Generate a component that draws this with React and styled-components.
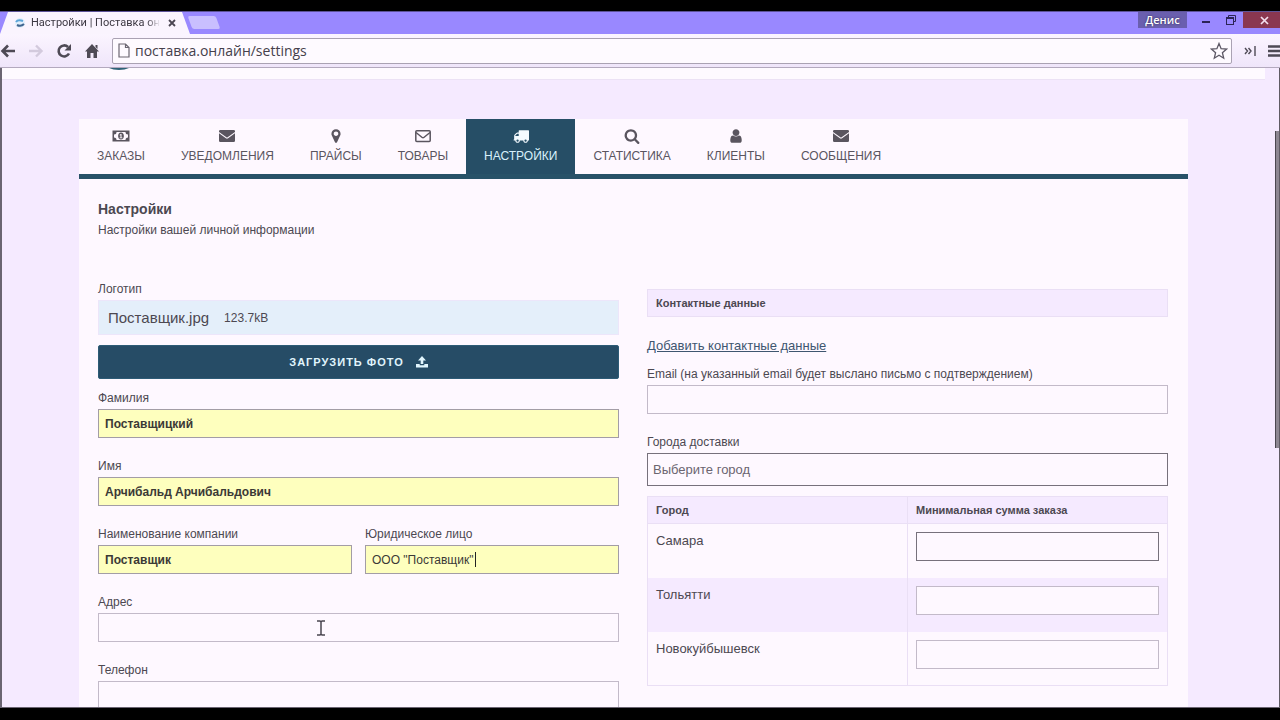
import styled, { createGlobalStyle } from "styled-components";

const tabs = [
    { icon: "money", label: "ЗАКАЗЫ" },
    { icon: "envelope", label: "УВЕДОМЛЕНИЯ" },
    { icon: "marker", label: "ПРАЙСЫ" },
    { icon: "envelopeOpen", label: "ТОВАРЫ" },
    { icon: "truck", label: "НАСТРОЙКИ", active: true },
    { icon: "search", label: "СТАТИСТИКА" },
    { icon: "user", label: "КЛИЕНТЫ" },
    { icon: "envelope", label: "СООБЩЕНИЯ" },
];

const cities = [
    { id: "samara", name: "Самара", dark: true },
    { id: "tolyatti", name: "Тольятти" },
    { id: "novokuybyshevsk", name: "Новокуйбышевск" },
];

function NavIcon({ name }) {
    switch (name) {
        case "money":
            return (
                <svg width="18" height="16" viewBox="0 0 18 16" fill="currentColor">
                    <path fillRule="evenodd" d="M.5 2.500h17v11H.5zM4.500 4A2.500 2.500 0 0 1 2 6.500v3A2.500 2.500 0 0 1 4.500 12h9A2.500 2.500 0 0 1 16 9.500v-3A2.500 2.500 0 0 1 13.500 4z" />
                    <path fillRule="evenodd" d="M9 4.500c1.900 0 2.900 1.600 2.900 3.500s-1 3.500-2.900 3.500S6.100 9.900 6.100 8 7.100 4.500 9 4.500zM8.700 5.900L7.500 7l.5.600.5-.4v2.200h-.9v.8h2.800v-.8h-.9V5.900z" />
                </svg>
            );
        case "envelope":
            return (
                <svg width="16" height="16" viewBox="0 0 16 16" fill="currentColor">
                    <path d="M0 3.300Q0 2 1.300 2h13.400Q16 2 16 3.300v.6L8.600 9.300q-.6.400-1.200 0L0 3.900z" />
                    <path d="M0 5.300l6.900 5q1.100.8 2.200 0l6.900-5v7.400q0 1.300-1.300 1.300H1.300Q0 14 0 12.700z" />
                </svg>
            );
        case "envelopeOpen":
            return (
                <svg width="16" height="16" viewBox="0 0 16 16" fill="none" stroke="currentColor" strokeWidth="1.500">
                    <rect x=".8" y="2.700" width="14.400" height="10.800" rx="1" />
                    <path d="M1 4.500l6.200 5q.8.600 1.600 0l6.200-5" />
                </svg>
            );
        case "marker":
            return (
                <svg width="16" height="16" viewBox="0 0 1792 1792" fill="currentColor">
                    <path d="M1152 640q0-106-75-181t-181-75-181 75-75 181 75 181 181 75 181-75 75-181zm256 0q0 109-33 179l-364 774q-16 33-47.500 52t-67.500 19-67.500-19-46.500-52l-365-774q-33-70-33-179 0-212 150-362t362-150 362 150 150 362z" />
                </svg>
            );
        case "truck":
            return (
                <svg width="16" height="16" viewBox="0 0 1792 1792" fill="#f4fbff">
                    <path d="M640 1408q0-52-38-90t-90-38-90 38-38 90 38 90 90 38 90-38 38-90zm-384-512h384v-256h-158q-13 0-22 9l-195 195q-9 9-9 22v30zm1280 512q0-52-38-90t-90-38-90 38-38 90 38 90 90 38 90-38 38-90zm256-1088v1024q0 15-4 26.500t-13.500 18.500-16.500 11.500-23.500 6-22.500 2-25.500 0-22.500-.5q0 106-75 181t-181 75-181-75-75-181h-384q0 106-75 181t-181 75-181-75-75-181h-64q-3 0-22.500.5t-25.500 0-22.500-2-23.500-6-16.500-11.500-13.500-18.500-4-26.500q0-26 19-45t45-19v-320q0-8-.5-35t0-38 2.500-34.500 6.500-37 14-30.500 22.500-30l198-198q19-19 50.500-32t58.500-13h160v-192q0-26 19-45t45-19h1024q26 0 45 19t19 45z" />
                </svg>
            );
        case "search":
            return (
                <svg width="16" height="16" viewBox="0 0 1792 1792" fill="currentColor">
                    <path d="M1216 832q0-185-131.500-316.500t-316.500-131.500-316.500 131.500-131.500 316.500 131.500 316.500 316.500 131.500 316.500-131.500 131.500-316.500zm512 832q0 52-38 90t-90 38q-54 0-90-38l-343-342q-179 124-399 124-143 0-273.500-55.500t-225-150-150-225-55.500-273.500 55.500-273.500 150-225 225-150 273.500-55.500 273.500 55.500 225 150 150 225 55.500 273.500q0 220-124 399l343 343q37 37 37 90z" />
                </svg>
            );
        default:
            return (
                <svg width="16" height="16" viewBox="0 0 1792 1792" fill="currentColor">
                    <path d="M1536 1399q0 109-62.500 187t-150.500 78h-854q-88 0-150.500-78t-62.500-187q0-85 8.500-160.500t31.500-152 58.500-131 94-89 134.500-34.500q131 128 313 128t313-128q76 0 134.500 34.500t94 89 58.500 131 31.500 152 8.500 160.500zm-256-887q0 159-112.500 271.500t-271.500 112.500-271.500-112.500-112.500-271.500 112.500-271.500 271.500-112.500 271.500 112.500 112.500 271.500z" />
                </svg>
            );
    }
}

function Field({ id, label, value, dark, light, caret }) {
    return (
        <FieldBox>
            <FieldLabel htmlFor={id}>{label}</FieldLabel>
            <InputWrap>
                <TextInput id={id} defaultValue={value} $filled={!!value} $dark={dark} $light={light} />
                {caret && <Caret />}
            </InputWrap>
        </FieldBox>
    );
}

function BrowserHeader() {
    return (
        <header>
            <TitleBar>
                <BrowserTab>
                    <svg width="12" height="12" viewBox="0 0 12 12" fill="none" strokeWidth="2">
                        <circle cx="6" cy="6" r="5" fill="#e2effb" />
                        <path d="M2 5q2-3 7-1" stroke="#5ba4d8" />
                        <path d="M3 8q4 2 7-1" stroke="#3f6590" />
                    </svg>
                    <TabTitle>Настройки | Поставка он</TabTitle>
                    <TabClose aria-label="Закрыть вкладку">
                        <svg width="8" height="8" viewBox="0 0 8 8" stroke="#4b4652" strokeWidth="1.800">
                            <path d="M1 1l6 6M7 1l-6 6" />
                        </svg>
                    </TabClose>
                </BrowserTab>
                <NewTab aria-label="Новая вкладка" />
                <WindowButtons>
                    <UserButton>Денис</UserButton>
                    <WindowButton aria-label="Свернуть">
                        <svg width="10" height="10" viewBox="0 0 10 10" stroke="#2b2456" strokeWidth="2">
                            <path d="M1 7h8" />
                        </svg>
                    </WindowButton>
                    <WindowButton aria-label="Развернуть">
                        <svg width="10" height="10" viewBox="0 0 10 10" fill="none" stroke="#2b2456">
                            <path d="M2.500 2V.5h7v6H8" />
                            <rect x=".5" y="2.500" width="7" height="7" />
                            <path d="M.5 3.500h7" />
                        </svg>
                    </WindowButton>
                    <CloseButton aria-label="Закрыть">
                        <svg width="9" height="9" viewBox="0 0 9 9" stroke="#f3dfee" strokeWidth="1.700">
                            <path d="M1 1l7 7M8 1L1 8" />
                        </svg>
                    </CloseButton>
                </WindowButtons>
            </TitleBar>
            <Toolbar>
                <ToolButton aria-label="Назад">
                    <svg width="16" height="16" viewBox="0 0 16 16" fill="none" stroke="#4e4a55" strokeWidth="2.600">
                        <path d="M15 8H3M8 2.500L2.500 8 8 13.500" />
                    </svg>
                </ToolButton>
                <ToolButton aria-label="Вперёд">
                    <svg width="16" height="16" viewBox="0 0 16 16" fill="none" stroke="#d3cadd" strokeWidth="2.400">
                        <path d="M1 8h12M8 2.500L13.500 8 8 13.500" />
                    </svg>
                </ToolButton>
                <ToolButton aria-label="Обновить">
                    <svg width="16" height="16" viewBox="0 0 16 16" fill="none">
                        <path d="M13 10.500A5.500 5.500 0 1 1 12 4" stroke="#4e4a55" strokeWidth="2.600" />
                        <path d="M15 1v6.500H8.500z" fill="#4e4a55" />
                    </svg>
                </ToolButton>
                <ToolButton aria-label="Домой">
                    <svg width="16" height="16" viewBox="0 0 16 16" fill="#4e4a55">
                        <path d="M8 1l7 7.500h-2V15H9.500v-5h-3v5H3V8.500H1zM11.500 2h2v4l-2-2z" />
                    </svg>
                </ToolButton>
                <AddressBar>
                    <svg width="12" height="15" viewBox="0 0 12 15" fill="none" stroke="#6c6772" strokeWidth="1.200">
                        <path d="M1 1h6.500L11 4.500V14H1zM7.500 1v3.500H11" />
                    </svg>
                    <AddressInput aria-label="Адрес страницы" defaultValue="поставка.онлайн/settings" />
                    <StarButton aria-label="Добавить в закладки">
                        <svg width="18" height="18" viewBox="0 0 18 18" fill="none" stroke="#5d5866" strokeWidth="1.300">
                            <path d="M9 1.500l2.100 5.200 5.500.4-4.200 3.600 1.300 5.500L9 13.200l-4.700 3 1.300-5.500L1.400 7.100l5.500-.4z" />
                        </svg>
                    </StarButton>
                </AddressBar>
                <MenuButton aria-label="Расширения">
                    <svg width="12" height="12" viewBox="0 0 12 12" fill="none" stroke="#4e4a55" strokeWidth="1.400">
                        <path d="M1 3l2.500 3L1 9M4.500 3L7 6 4.500 9M11 1v10" />
                    </svg>
                </MenuButton>
                <MenuButton aria-label="Меню">
                    <svg width="12" height="12" viewBox="0 0 12 12" stroke="#4e4a55" strokeWidth="2.400">
                        <path d="M0 1.500h12M0 6h12M0 10.500h12" />
                    </svg>
                </MenuButton>
            </Toolbar>
        </header>
    );
}

export default function App() {
    return (
        <Screen>
            <GlobalStyle />
            <BrowserHeader />
            <Viewport>
                <Page>
                    <SiteHeader>
                        <svg width="20" height="3" viewBox="0 0 20 3" fill="#2f6378">
                            <path d="M0 0h20q-4 2-10 2T0 0z" />
                        </svg>
                    </SiteHeader>
                    <Card>
                        <Nav>
                            {tabs.map((tab) => (
                                <NavLink key={tab.label} href="#" $active={tab.active}>
                                    <NavIcon name={tab.icon} />
                                    {tab.label}
                                </NavLink>
                            ))}
                        </Nav>
                        <Content>
                            <Title>Настройки</Title>
                            <Subtitle>Настройки вашей личной информации</Subtitle>
                            <Columns>
                                <Column>
                                    <FieldLabel as="p">Логотип</FieldLabel>
                                    <FileBox>
                                        <FileName>Поставщик.jpg</FileName>
                                        <FileSize>123.7kB</FileSize>
                                    </FileBox>
                                    <UploadButton>
                                        ЗАГРУЗИТЬ ФОТО
                                        <svg width="12" height="12" viewBox="0 0 12 12" fill="currentColor">
                                            <path d="M6 0l4 4.500H7.300V8H4.700V4.500H2zM0 8h3.700v1.300h4.600V8H12v3.500H0z" />
                                        </svg>
                                    </UploadButton>
                                    <Field id="surname" label="Фамилия" value="Поставщицкий" />
                                    <Field id="name" label="Имя" value="Арчибальд Арчибальдович" />
                                    <FieldPair>
                                        <Field id="company" label="Наименование компании" value="Поставщик" />
                                        <Field id="legal" label="Юридическое лицо" value={'ООО "Поставщик"'} light caret />
                                    </FieldPair>
                                    <Field id="address" label="Адрес" />
                                    <Field id="phone" label="Телефон" />
                                </Column>
                                <Column>
                                    <PanelTitle>Контактные данные</PanelTitle>
                                    <AddLink href="#">Добавить контактные данные</AddLink>
                                    <Field id="email" label="Email (на указанный email будет выслано письмо с подтверждением)" />
                                    <FieldLabel htmlFor="city">Города доставки</FieldLabel>
                                    <CityInput id="city" placeholder="Выберите город" />
                                    <CityTable>
                                        <thead>
                                            <tr>
                                                <th>Город</th>
                                                <th>Минимальная сумма заказа</th>
                                            </tr>
                                        </thead>
                                        <tbody>
                                            {cities.map((city) => (
                                                <tr key={city.id}>
                                                    <td>
                                                        <label htmlFor={city.id}>{city.name}</label>
                                                    </td>
                                                    <td>
                                                        <TextInput id={city.id} $dark={city.dark} />
                                                    </td>
                                                </tr>
                                            ))}
                                        </tbody>
                                    </CityTable>
                                </Column>
                            </Columns>
                        </Content>
                    </Card>
                </Page>
                <ScrollTrack>
                    <ScrollThumb />
                </ScrollTrack>
                <Pointer width="10" height="16" viewBox="0 0 10 16" fill="none" stroke="#4a4550" strokeWidth="1.500">
                    <path d="M1 1h3l1 1 1-1h3M5 2v12M1 15h3l1-1 1 1h3" />
                </Pointer>
            </Viewport>
        </Screen>
    );
}

const GlobalStyle = createGlobalStyle`
    * {
        box-sizing: border-box;
    }
    body {
        margin: 0;
        background: #000;
        font-family: "Liberation Sans", Arial, sans-serif;
        color: #4c4851;
    }
    button {
        border: 0;
        padding: 0;
        background: none;
        font-family: inherit;
    }
    h1, p {
        margin: 0;
    }
`;

const Screen = styled.div`
    height: 100vh;
    padding: 11px 0 12px;
    display: flex;
    flex-direction: column;
    overflow: hidden;
    background: #000;
`;

const TitleBar = styled.div`
    display: flex;
    height: 23px;
    background: #9988ff;
    border-top: 1px solid #5d5399;
`;

const BrowserTab = styled.div`
    display: flex;
    align-items: center;
    gap: 5px;
    width: 190px;
    padding-left: 14px;
    background: #faf4fe;
    clip-path: polygon(8px 0, 182px 0, 190px 100%, 0 100%);
`;

const TabTitle = styled.span`
    width: 129px;
    white-space: nowrap;
    font-family: Roboto, sans-serif;
    font-size: 11px;
    line-height: 20px;
    color: #3c3842;
    mask-image: linear-gradient(to right, #000 90%, transparent);
`;

const TabClose = styled.button`
    display: flex;
    margin-left: 3px;
`;

const NewTab = styled.button`
    width: 28px;
    height: 13px;
    margin-top: 4px;
    background: #c9bfff;
    border-radius: 2px;
    transform: skewX(20deg);
`;

const WindowButtons = styled.div`
    display: flex;
    align-items: flex-start;
    margin-left: auto;
`;

const UserButton = styled.button`
    width: 49px;
    height: 16px;
    margin-right: 6px;
    background: #6a5fae;
    font-family: "Open Sans", sans-serif;
    font-size: 11px;
    font-weight: 600;
    line-height: 14px;
    color: #fff;
    text-shadow: 0 0 2px #2d2850;
`;

const WindowButton = styled.button`
    display: flex;
    align-items: center;
    justify-content: center;
    width: 25px;
    height: 16px;
`;

const CloseButton = styled(WindowButton)`
    width: 37px;
    padding-left: 6px;
    background: #8a3750;
`;

const Toolbar = styled.div`
    display: flex;
    align-items: center;
    gap: 12px;
    height: 34px;
    overflow: hidden;
    background: linear-gradient(#fbf5ff, #efe5fa);
    border-bottom: 1px solid #b3a9be;
`;

const ToolButton = styled.button`
    display: flex;
`;

const AddressBar = styled.div`
    flex: 1;
    display: flex;
    align-items: center;
    gap: 5px;
    height: 26px;
    padding: 0 3px 0 5px;
    background: #fefaff;
    border: 1px solid #aaa2b3;
    border-radius: 2px;
`;

const AddressInput = styled.input`
    flex: 1;
    padding: 0;
    border: 0;
    outline: 0;
    background: none;
    font-family: "Open Sans", sans-serif;
    font-size: 14px;
    color: #45404b;
`;

const StarButton = styled.button`
    display: flex;
`;

const MenuButton = styled.button`
    display: flex;
`;

const Viewport = styled.main`
    position: relative;
    flex: 1;
    display: flex;
    min-height: 0;
    overflow: hidden;
    background: #f5eaff;
    border-left: 2px solid #6b6572;
    border-bottom: 1px solid #6b6572;
`;

const Page = styled.div`
    flex: 1;
`;

const SiteHeader = styled.div`
    display: flex;
    height: 12px;
    padding-left: 107px;
    background: #fefaff;
    border-bottom: 1px solid #ece2f5;
`;

const Card = styled.section`
    margin: 39px 77px 0;
    background: #fef8ff;
`;

const Nav = styled.nav`
    display: flex;
    border-bottom: 5px solid #285268;
`;

const NavLink = styled.a`
    display: flex;
    flex-direction: column;
    align-items: center;
    gap: 3px;
    height: 55px;
    padding: 9px 18px 0;
    font-size: 12px;
    line-height: 18px;
    text-decoration: none;
    color: ${({ $active }) => ($active ? "#d8f1fb" : "#5a555f")};
    background: ${({ $active }) => ($active ? "#264e66" : "transparent")};
`;

const Content = styled.div`
    padding: 20px 20px 0 19px;
`;

const Title = styled.h1`
    font-size: 14px;
    line-height: 20px;
    font-weight: 700;
`;

const Subtitle = styled.p`
    font-size: 12px;
    line-height: 22px;
`;

const Columns = styled.div`
    display: grid;
    grid-template-columns: 1fr 1fr;
    gap: 28px;
    margin-top: 39px;
`;

const Column = styled.div`
    min-width: 0;
`;

const FieldBox = styled.div`
    margin-bottom: 19px;
`;

const FieldPair = styled.div`
    display: grid;
    grid-template-columns: 1fr 1fr;
    gap: 13px;
`;

const FieldLabel = styled.label`
    display: block;
    margin-bottom: 2px;
    font-size: 12px;
    line-height: 18px;
`;

const InputWrap = styled.div`
    position: relative;
`;

const TextInput = styled.input`
    display: block;
    width: 100%;
    height: 29px;
    padding: 0 6px;
    border: 1px solid ${({ $dark, $filled }) => ($dark ? "#77717c" : $filled ? "#a39da6" : "#c3bac9")};
    border-radius: 0;
    outline: 0;
    background: ${({ $filled }) => ($filled ? "#feffbe" : "#fef8ff")};
    font-family: inherit;
    font-size: 12px;
    font-weight: ${({ $light }) => ($light ? 400 : 700)};
    color: #3b3936;
`;

const Caret = styled.span`
    position: absolute;
    top: 7px;
    left: 110px;
    width: 1px;
    height: 15px;
    background: #222;
`;

const FileBox = styled.div`
    display: flex;
    align-items: center;
    gap: 15px;
    height: 35px;
    padding-left: 9px;
    background: #e4effa;
    border: 1px solid #ece6fa;
`;

const FileName = styled.span`
    font-size: 15px;
`;

const FileSize = styled.span`
    font-size: 12px;
`;

const UploadButton = styled.button`
    display: flex;
    align-items: center;
    justify-content: center;
    gap: 12px;
    width: 100%;
    height: 34px;
    margin: 10px 0;
    background: #264c66;
    border: 1px solid #2d5b76;
    border-radius: 2px;
    font-size: 11px;
    font-weight: 700;
    letter-spacing: 1px;
    color: #e0f5fd;
`;

const PanelTitle = styled.div`
    height: 28px;
    margin: 9px 0 19px;
    padding: 0 8px;
    background: #f5eaff;
    border: 1px solid #eadff5;
    font-size: 11px;
    font-weight: 700;
    line-height: 26px;
`;

const AddLink = styled.a`
    display: block;
    margin-bottom: 9px;
    font-size: 13px;
    line-height: 20px;
    color: #3f5670;
`;

const CityInput = styled.input`
    display: block;
    width: 100%;
    height: 33px;
    margin-bottom: 10px;
    padding: 0 5px;
    border: 1px solid #77717c;
    outline: 0;
    background: #fef8ff;
    font-family: inherit;
    font-size: 13px;
    &::placeholder {
        color: #6b6570;
    }
`;

const CityTable = styled.table`
    width: 100%;
    table-layout: fixed;
    border-collapse: collapse;
    border: 1px solid #eadff5;
    th {
        height: 27px;
        padding: 0 8px;
        background: #f5eaff;
        border: 1px solid #eadff5;
        font-size: 11px;
        text-align: left;
    }
    td {
        height: 54px;
        padding: 8px;
        border-right: 1px solid #eadff5;
        font-size: 13px;
        line-height: 18px;
        vertical-align: top;
    }
    tbody tr:nth-child(even) {
        background: #f5eaff;
    }
`;

const ScrollTrack = styled.div`
    width: 15px;
    display: flex;
    justify-content: flex-end;
    padding-top: 63px;
    background: #f5eaff;
    border-right: 1px solid #5f5b64;
`;

const ScrollThumb = styled.div`
    width: 4px;
    height: 55%;
    background: #8d8792;
    border-left: 1px solid #4b4750;
`;

const Pointer = styled.svg`
    position: absolute;
    top: 552px;
    left: 314px;
`;
